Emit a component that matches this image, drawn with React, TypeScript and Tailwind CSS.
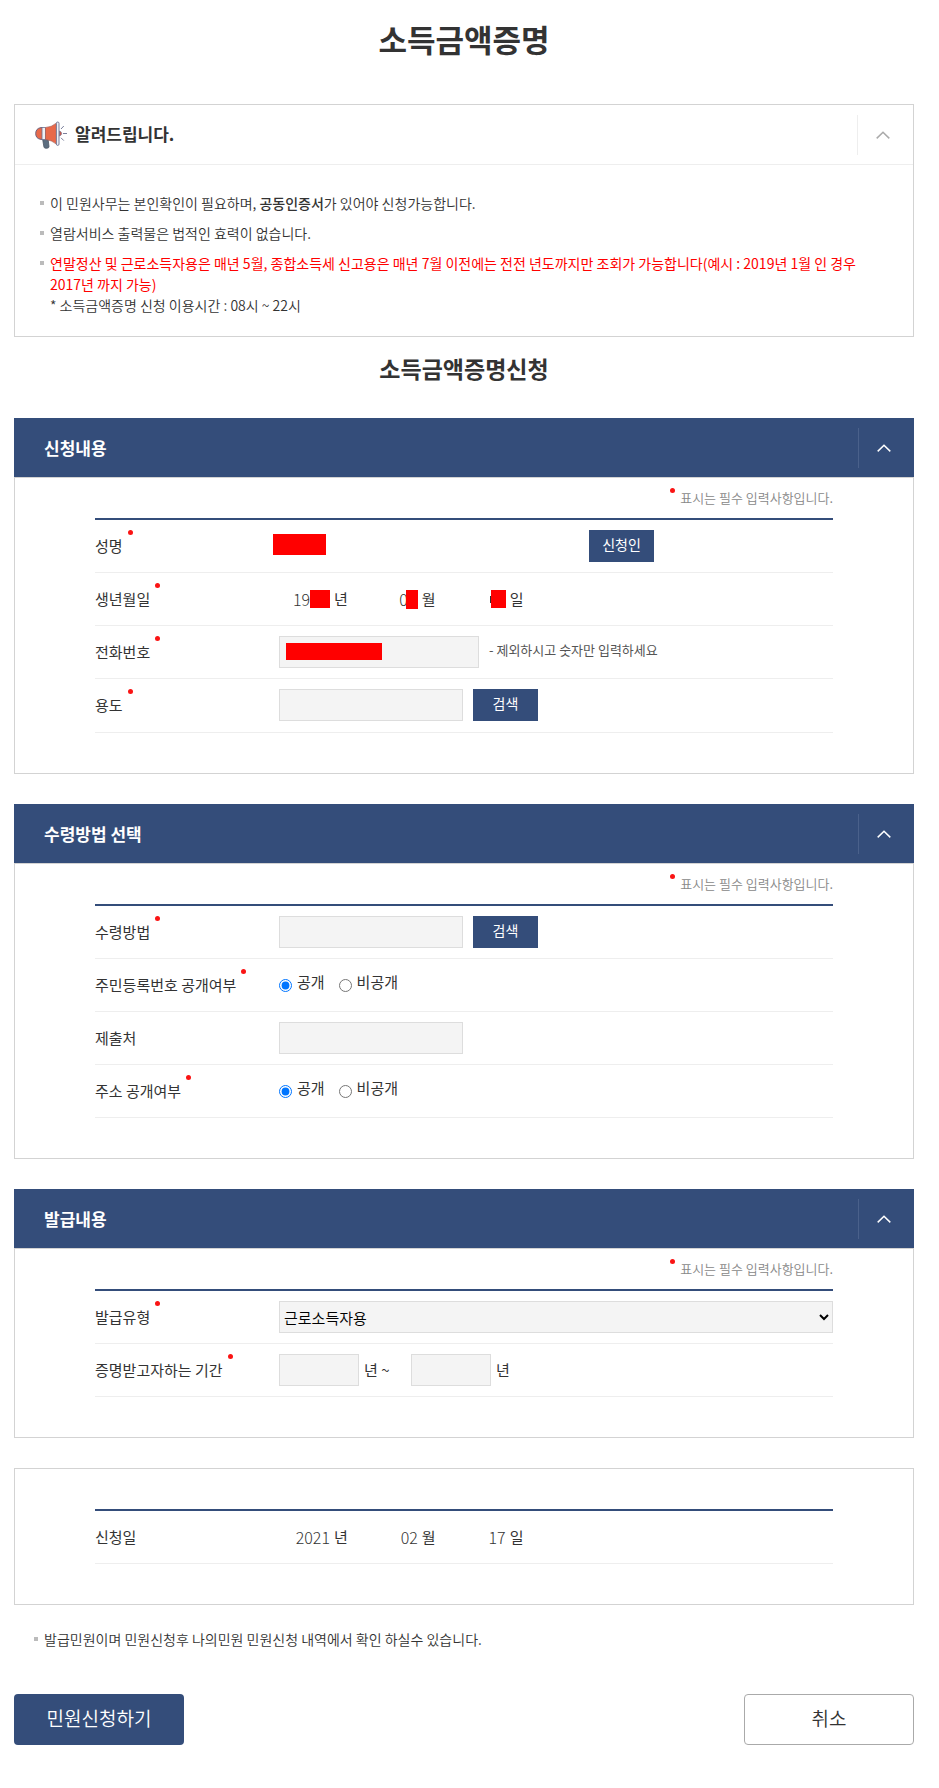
import { useState } from "react";
import type { ReactNode } from "react";

const inputClass =
  "h-8 border border-[#ddd] bg-[#f4f4f4] px-1 text-sm text-[#333] outline-none";

function Megaphone() {
  return (
    <svg width="32" height="28" viewBox="0 0 32 28" fill="none" aria-hidden="true">
      <path
        d="M7.5 17.5 L13 17.5 L14 25.5 Q14 27.2 12 27.2 L10.4 27.2 Q9.2 27.2 8.9 25.8 Z"
        fill="#5c6e80"
        stroke="#4b5563"
        strokeWidth="0.8"
      />
      <path d="M7.5 6.6 H6 Q0.7 7.4 0.7 12.6 Q0.7 17.6 6 18.4 H7.5 Z" fill="#e8694a" stroke="#6b6480" />
      <path d="M7 6.5 H10.5 V18.5 H7 Z" fill="#eef0f6" stroke="#6b7090" strokeWidth="0.8" />
      <path d="M10.5 6.5 Q16.5 6.2 21.5 2 V23.2 Q16.5 19 10.5 18.5 Z" fill="#e8694a" stroke="#9a5a58" strokeWidth="0.6" />
      <path d="M24.5 10 Q26.6 10.6 26.6 12.5 Q26.6 14.4 24.5 15 Z" fill="#c9574a" stroke="#6b6480" strokeWidth="0.6" />
      <rect x="21.4" y="1" width="2.6" height="23.4" rx="1.3" fill="#eef0f6" stroke="#6b7090" strokeWidth="0.9" />
      <path d="M26 8 L28.8 5 M28 12.5 H32 M26 16.8 L28.8 19.6" stroke="#6b7090" strokeWidth="0.9" />
    </svg>
  );
}

function Chevron() {
  return (
    <svg width="14" height="8" viewBox="0 0 14 8" fill="none" aria-hidden="true">
      <path d="M0.7 7.4 L7 1.2 L13.3 7.4" stroke="currentColor" strokeWidth="1.5" />
    </svg>
  );
}

function Dot({ className = "" }: { className?: string }) {
  return <span className={`size-[5px] shrink-0 rounded-full bg-[#fa1414] ${className}`} />;
}

function Bullet() {
  return <span className="mt-2 size-1 shrink-0 bg-[#bbb]" />;
}

function Row({
  label,
  htmlFor,
  required,
  tall,
  children,
}: {
  label: string;
  htmlFor?: string;
  required?: boolean;
  tall?: boolean;
  children: ReactNode;
}) {
  return (
    <div className={`flex border-b border-[#eee] ${tall ? "h-[54px]" : "h-[53px]"}`}>
      <div className="flex w-[184px] shrink-0 gap-[5px]">
        <label htmlFor={htmlFor} className="self-center text-[15px]">
          {label}
        </label>
        {required && <Dot className="mt-[10px]" />}
      </div>
      <div className="flex h-[52px] min-w-0 flex-1 items-center text-[15px]">{children}</div>
    </div>
  );
}

function Section({ title, children }: { title: string; children: ReactNode }) {
  const [open, setOpen] = useState(true);

  return (
    <section className="mb-[30px]">
      <div className="flex h-[59px] items-center justify-between bg-[#344d7a] text-white">
        <h3 className="pl-[30px] text-[17px] font-bold">{title}</h3>
        <button
          type="button"
          aria-label={title}
          aria-expanded={open}
          onClick={() => setOpen(!open)}
          className="flex h-10 w-14 items-center border-l border-[#4a618b] pl-[18px]"
        >
          <Chevron />
        </button>
      </div>
      {open && (
        <div className="border border-[#d3d3d3] px-20 pb-10">
          <div className="flex h-10 items-center justify-end gap-[5px] text-[13px] font-[350] text-[#888]">
            <Dot className="mb-[15px]" />
            표시는 필수 입력사항입니다.
          </div>
          <div className="border-t-2 border-[#344d7a]">{children}</div>
        </div>
      )}
    </section>
  );
}

function DatePart({ value, unit, first }: { value: ReactNode; unit: string; first?: boolean }) {
  return (
    <span className="flex items-center gap-1">
      <span className={`flex justify-end text-base font-light ${first ? "w-[51px]" : "w-[70px]"}`}>
        {value}
      </span>
      <span>{unit}</span>
    </span>
  );
}

function BlueButton({ children }: { children: ReactNode }) {
  return (
    <button type="button" className="h-8 w-[65px] bg-[#344d7a] pb-1 text-sm text-white">
      {children}
    </button>
  );
}

function OpenChoice({ name }: { name: string }) {
  return (
    <div className="flex gap-[14px]">
      <label className="flex items-center gap-[5px]">
        <input type="radio" name={name} defaultChecked className="size-[13px]" />
        <span className="pb-1.5">공개</span>
      </label>
      <label className="flex items-center gap-[5px]">
        <input type="radio" name={name} className="size-[13px]" />
        <span className="pb-1.5">비공개</span>
      </label>
    </div>
  );
}

export default function App() {
  const [noticeOpen, setNoticeOpen] = useState(true);

  return (
    <main className="bg-white pr-[25px] pb-[42px] pl-[14px] font-['Noto_Sans_CJK_KR','Noto_Sans',sans-serif] text-[#333]">
      <h1 className="pt-4 text-center text-[31px] leading-[46px] font-bold">소득금액증명</h1>

      <section className="mt-[42px] border border-[#d3d3d3]">
        <div className="flex h-[60px] items-center justify-between border-b border-[#eee]">
          <h2 className="flex items-center gap-2 pl-5 text-[17px] font-bold">
            <Megaphone />
            <span className="pb-0.5">알려드립니다.</span>
          </h2>
          <button
            type="button"
            aria-label="알려드립니다."
            aria-expanded={noticeOpen}
            onClick={() => setNoticeOpen(!noticeOpen)}
            className="flex h-10 w-14 items-center border-l border-[#eee] pl-[18px] text-[#aaa]"
          >
            <Chevron />
          </button>
        </div>
        {noticeOpen && (
          <ul className="flex flex-col gap-[9px] px-[25px] pt-7 pb-5 text-sm leading-[21px] font-[350]">
            <li className="flex gap-1.5">
              <Bullet />
              <span>
                이 민원사무는 본인확인이 필요하며, <strong className="font-medium">공동인증서</strong>가
                있어야 신청가능합니다.
              </span>
            </li>
            <li className="flex gap-1.5">
              <Bullet />
              <span>열람서비스 출력물은 법적인 효력이 없습니다.</span>
            </li>
            <li className="flex gap-1.5">
              <Bullet />
              <span>
                <strong className="font-normal text-[#f00]">
                  연말정산 및 근로소득자용은 매년 5월, 종합소득세 신고용은 매년 7월 이전에는 전전
                  년도까지만 조회가 가능합니다(예시 : 2019년 1월 인 경우 2017년 까지 가능)
                </strong>
                <br />* 소득금액증명 신청 이용시간 : 08시 ~ 22시
              </span>
            </li>
          </ul>
        )}
      </section>

      <h2 className="pt-[14px] pb-[33px] text-center text-[23px] leading-[34px] font-bold">
        소득금액증명신청
      </h2>

      <form onSubmit={(e) => e.preventDefault()}>
        <Section title="신청내용">
          <Row label="성명" htmlFor="name" required>
            <div className="relative mr-[10px]">
              <input id="name" type="text" readOnly className="h-8 w-[300px] outline-none" />
              <span className="absolute top-1 -left-1.5 h-[21px] w-[53px] bg-[#f00]" />
            </div>
            <BlueButton>신청인</BlueButton>
          </Row>
          <Row label="생년월일" required>
            <DatePart
              first
              unit="년"
              value={
                <span className="flex items-center">
                  19
                  <span className="h-[18px] w-5 bg-[#f00]" />
                </span>
              }
            />
            <DatePart
              unit="월"
              value={
                <span className="flex items-center">
                  0<span className="-ml-0.5 h-[19px] w-3 bg-[#f00]" />
                </span>
              }
            />
            <DatePart
              unit="일"
              value={
                <span className="flex items-center">
                  <span className="h-[7px] w-px bg-[#333]" />
                  <span className="h-[18px] w-[15px] bg-[#f00]" />
                </span>
              }
            />
          </Row>
          <Row label="전화번호" htmlFor="phone" required>
            <div className="relative mr-[10px]">
              <input id="phone" type="text" className={`${inputClass} w-[200px]`} />
              <span className="absolute top-[7px] left-[7px] h-[17px] w-24 bg-[#f00]" />
            </div>
            <span className="pb-1 text-[13px] text-[#555]">- 제외하시고 숫자만 입력하세요</span>
          </Row>
          <Row label="용도" htmlFor="purpose" required tall>
            <input id="purpose" type="text" className={`${inputClass} mr-[10px] w-[184px]`} />
            <BlueButton>검색</BlueButton>
          </Row>
        </Section>

        <Section title="수령방법 선택">
          <Row label="수령방법" htmlFor="receive" required>
            <input id="receive" type="text" className={`${inputClass} mr-[10px] w-[184px]`} />
            <BlueButton>검색</BlueButton>
          </Row>
          <Row label="주민등록번호 공개여부" required>
            <OpenChoice name="resident" />
          </Row>
          <Row label="제출처" htmlFor="submitTo">
            <input id="submitTo" type="text" className={`${inputClass} w-[184px]`} />
          </Row>
          <Row label="주소 공개여부" required>
            <OpenChoice name="address" />
          </Row>
        </Section>

        <Section title="발급내용">
          <Row label="발급유형" htmlFor="issueType" required>
            <select
              id="issueType"
              className="h-8 w-full border border-[#ddd] bg-[#f4f4f4] text-[15px] font-[350] text-black outline-none"
            >
              <option>근로소득자용</option>
            </select>
          </Row>
          <Row label="증명받고자하는 기간" htmlFor="from" required>
            <input id="from" type="text" className={`${inputClass} mr-[5px] w-20`} />
            <span className="w-[47px]">년 ~</span>
            <input type="text" aria-label="년" className={`${inputClass} mr-[5px] w-20`} />
            <span>년</span>
          </Row>
        </Section>

        <section className="border border-[#d3d3d3] px-20 py-10">
          <div className="border-t-2 border-[#344d7a]">
            <Row label="신청일">
              <DatePart first value="2021" unit="년" />
              <DatePart value="02" unit="월" />
              <DatePart value="17" unit="일" />
            </Row>
          </div>
        </section>

        <p className="mt-6 flex gap-1.5 pl-5 text-sm leading-[21px] font-[350]">
          <Bullet />
          발급민원이며 민원신청후 나의민원 민원신청 내역에서 확인 하실수 있습니다.
        </p>

        <div className="mt-11 flex justify-between">
          <button
            type="submit"
            className="h-[51px] w-[170px] rounded bg-[#344d7a] pb-0.5 text-[19px] font-[350] text-white"
          >
            민원신청하기
          </button>
          <button
            type="button"
            className="h-[51px] w-[170px] rounded border border-[#aaa] bg-white pb-0.5 text-[19px] font-[350]"
          >
            취소
          </button>
        </div>
      </form>
    </main>
  );
}
